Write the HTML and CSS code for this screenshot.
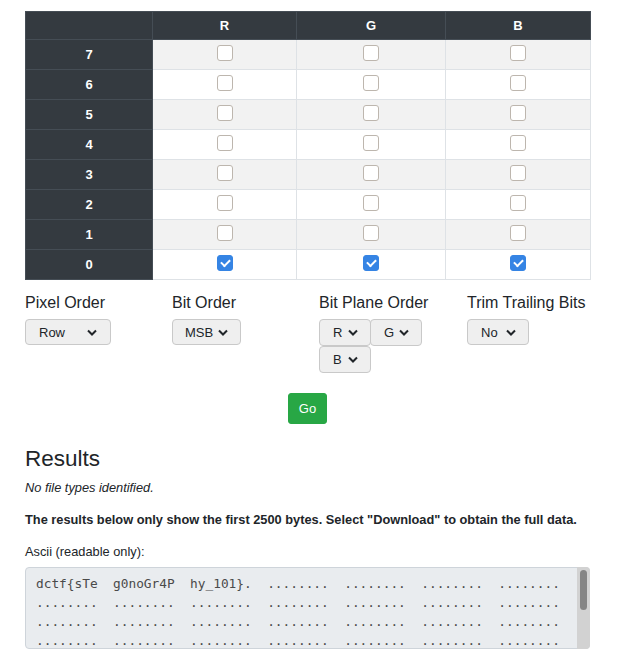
FILE: index.html
```html
<!DOCTYPE html>
<html>
<head>
<meta charset="utf-8">
<link rel="stylesheet" href="styles.css">
</head>
<body>
<div class="page">
  <table class="bits">
    <colgroup>
      <col class="c0"><col class="c1"><col class="c2"><col class="c3">
    </colgroup>
    <thead>
      <tr><th class="dark"></th><th class="dark">R</th><th class="dark">G</th><th class="dark">B</th></tr>
    </thead>
    <tbody>
      <tr class="odd"><th class="dark">7</th><td><input type="checkbox"></td><td><input type="checkbox"></td><td><input type="checkbox"></td></tr>
      <tr><th class="dark">6</th><td><input type="checkbox"></td><td><input type="checkbox"></td><td><input type="checkbox"></td></tr>
      <tr class="odd"><th class="dark">5</th><td><input type="checkbox"></td><td><input type="checkbox"></td><td><input type="checkbox"></td></tr>
      <tr><th class="dark">4</th><td><input type="checkbox"></td><td><input type="checkbox"></td><td><input type="checkbox"></td></tr>
      <tr class="odd"><th class="dark">3</th><td><input type="checkbox"></td><td><input type="checkbox"></td><td><input type="checkbox"></td></tr>
      <tr><th class="dark">2</th><td><input type="checkbox"></td><td><input type="checkbox"></td><td><input type="checkbox"></td></tr>
      <tr class="odd"><th class="dark">1</th><td><input type="checkbox"></td><td><input type="checkbox"></td><td><input type="checkbox"></td></tr>
      <tr><th class="dark">0</th><td><input type="checkbox" checked></td><td><input type="checkbox" checked></td><td><input type="checkbox" checked></td></tr>
    </tbody>
  </table>

  <div class="options">
    <div class="opt">
      <div class="label">Pixel Order</div>
      <div class="btns"><span class="dd w-row">Row<svg viewBox="0 0 10 6"><polyline points="1,1 5,5 9,1"/></svg></span></div>
    </div>
    <div class="opt">
      <div class="label">Bit Order</div>
      <div class="btns"><span class="dd w-msb">MSB<svg viewBox="0 0 10 6"><polyline points="1,1 5,5 9,1"/></svg></span></div>
    </div>
    <div class="opt">
      <div class="label">Bit Plane Order</div>
      <div class="btns plane">
        <span class="dd w-r">R<svg viewBox="0 0 10 6"><polyline points="1,1 5,5 9,1"/></svg></span>
        <span class="dd w-r">G<svg viewBox="0 0 10 6"><polyline points="1,1 5,5 9,1"/></svg></span>
        <span class="dd w-r">B<svg viewBox="0 0 10 6"><polyline points="1,1 5,5 9,1"/></svg></span>
      </div>
    </div>
    <div class="opt">
      <div class="label">Trim Trailing Bits</div>
      <div class="btns"><span class="dd w-no">No<svg viewBox="0 0 10 6"><polyline points="1,1 5,5 9,1"/></svg></span></div>
    </div>
  </div>

  <div class="go-row"><button class="go">Go</button></div>

  <h2 class="results">Results</h2>
  <p class="none">No file types identified.</p>
  <p class="note">The results below only show the first 2500 bytes. Select "Download" to obtain the full data.</p>
  <p class="ascii-label">Ascii (readable only):</p>
  <div class="ascii-wrap">
  <pre class="ascii">dctf{sTe  g0noGr4P  hy_101}.  ........  ........  ........  ........
........  ........  ........  ........  ........  ........  ........
........  ........  ........  ........  ........  ........  ........
........  ........  ........  ........  ........  ........  ........
........  ........  ........  ........  ........  ........  ........
........  ........  ........  ........  ........  ........  ........
........  ........  ........  ........  ........  ........  ........
........  ........  ........  ........  ........  ........  ........</pre>
  <div class="sbar"><div class="sthumb"></div></div>
  </div>
</div>
</body>
</html>
```

FILE: styles.css
```css
* { box-sizing: border-box; }
body {
  margin: 0;
  font-family: "Liberation Sans", Arial, sans-serif;
  color: #212529;
  background: #fff;
  font-size: 12.8px;
}
.page {
  width: 565px;
  margin-left: 25px;
  padding-top: 11px;
}
.bits {
  width: 565px;
  border-collapse: collapse;
  table-layout: fixed;
  font-size: 13px;
}
.c0 { width: 127px; }
.c1 { width: 144px; }
.c2 { width: 149px; }
.c3 { width: 145px; }
.bits th, .bits td {
  border: 1px solid #dee2e6;
  text-align: center;
  vertical-align: middle;
  padding: 0;
}
.bits thead tr { height: 28px; }
.bits tbody tr { height: 30px; }
.bits tbody tr.odd td { background: #f2f2f2; }
.bits .dark {
  background: #343a40;
  color: #fff;
  border-color: #454d55;
  font-weight: bold;
}
.bits input {
  -webkit-appearance: none;
  appearance: none;
  width: 16px;
  height: 16px;
  margin: 0;
  vertical-align: middle;
  position: relative;
  top: -2px;
  border: 1px solid #bdb6ae;
  border-radius: 3px;
  background: #fff;
}
.bits input:checked {
  border-color: #3584e4;
  background: #3584e4;
}
.bits input:checked::after {
  content: "";
  position: absolute;
  left: 3px;
  top: 3px;
  width: 7px;
  height: 4px;
  border-left: 2.5px solid #fff;
  border-bottom: 2.5px solid #fff;
  transform: rotate(-45deg);
}
.options {
  display: grid;
  grid-template-columns: 147px 147px 148px 123px;
  margin-top: 13px;
}
.label {
  font-size: 16px;
  line-height: 20px;
  margin-bottom: 6px;
}
.btns {
  display: flex;
  flex-wrap: wrap;
}
.plane { width: 110px; }
.dd {
  display: inline-flex;
  align-items: center;
  justify-content: space-between;
  height: 26px;
  padding: 0 12px 0 13px;
  background: #efefef;
  border: 1px solid #c9c9c9;
  border-radius: 4px;
  font-size: 13px;
  color: #212529;
}
.plane .dd { height: 27px; margin-right: -1px; }
.plane .dd:nth-child(2) { margin-right: 0; }
.dd svg {
  width: 10px;
  height: 7px;
  fill: none;
  stroke: #212529;
  stroke-width: 2;
}
.w-row { width: 86px; padding-right: 13px; }
.w-msb { width: 69px; padding-left: 12px; padding-right: 12px; }
.w-r { width: 52px; }
.w-no { width: 62px; }
.go-row {
  display: flex;
  justify-content: center;
  margin-top: 20px;
}
.go {
  width: 39px;
  height: 31px;
  background: #28a745;
  color: #fff;
  border: 1px solid #28a745;
  border-radius: 3px;
  font-family: "Liberation Sans", Arial, sans-serif;
  font-size: 13px;
  padding: 0;
}
.results {
  font-size: 22.5px;
  font-weight: normal;
  line-height: 28px;
  margin: 21px 0 0;
}
.none {
  font-style: italic;
  line-height: 19.5px;
  margin: 5px 0 0;
}
.note {
  font-weight: bold;
  line-height: 19.5px;
  margin: 12px 0 0;
}
.ascii-label {
  line-height: 19.5px;
  margin: 12.5px 0 0;
}
.ascii-wrap {
  position: relative;
  margin-top: 6px;
}
.ascii {
  margin: 0;
  height: 82px;
  overflow: hidden;
  background: #e9ecef;
  border: 1px solid #ced4da;
  border-radius: 4px;
  padding: 6px 10px;
  font-family: "DejaVu Sans Mono", monospace;
  font-size: 12.8px;
  line-height: 19px;
  color: #4a4a4a;
}
.sbar {
  position: absolute;
  right: 0;
  top: 0;
  width: 13px;
  height: 82px;
  background: #d2d2d2;
  border-radius: 0 4px 4px 0;
  padding: 3px;
}
.sthumb {
  width: 7px;
  height: 40px;
  background: #858585;
  border-radius: 4px;
}
```
